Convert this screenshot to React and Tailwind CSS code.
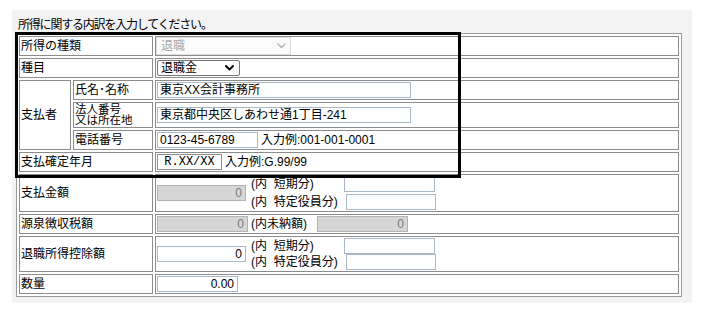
import React from "react";

const FONT = { fontFamily: '"Liberation Sans", "Noto Sans CJK JP", sans-serif' };

function Chevron({ color = "#000", w = 2 }) {
  return (
    <svg width="9" height="6" viewBox="0 0 9 6" className="shrink-0">
      <polyline points="1,1 4.5,4.5 8,1" fill="none" stroke={color} strokeWidth={w} strokeLinecap="round" strokeLinejoin="round" />
    </svg>
  );
}

function TextBox({ w, children, cls = "" }) {
  return (
    <div className={`h-[16px] border border-[#a9b7c6] bg-white flex items-center px-[2px] text-[12px] leading-[14px] whitespace-nowrap overflow-hidden ${cls}`} style={{ width: w }}>
      {children}
    </div>
  );
}

function GrayBox({ w }) {
  return (
    <div className="h-[16px] border border-[#b3b3b3] bg-[#d6d6d6] flex items-center justify-end pr-[3px] text-[12px] leading-[14px] text-[#7a7a7a]" style={{ width: w }}>
      0
    </div>
  );
}

function Cell({ children, cls = "", ...rest }) {
  return (
    <td className={`border border-[#8c8c8c] p-[1px] align-middle ${cls}`} {...rest}>
      {children}
    </td>
  );
}

function SubLines({ gap = "gap-[1px]" }) {
  return (
    <div className={`flex flex-col ${gap} ml-[5px]`}>
      <div className="flex items-center h-[16px] overflow-hidden">
        <span className="w-[93px] whitespace-pre leading-[14px]">(内  短期分)</span>
        <TextBox w={91} />
      </div>
      <div className="flex items-center h-[16px] overflow-hidden">
        <span className="w-[95px] whitespace-pre leading-[14px]">(内  特定役員分)</span>
        <TextBox w={90} />
      </div>
    </div>
  );
}

export default function App() {
  return (
    <div className="w-[701px] h-[315px] bg-white pt-[10px] pl-[12px] text-black text-[12px]" style={FONT}>
      <div className="relative w-[680px] h-[293px] bg-[#f3f3f3] pt-[8px] pl-[4px]">
        <div className="h-[15px] leading-[15px] pl-[2px] tracking-[-1.2px] whitespace-nowrap">所得に関する内訳を入力してください。</div>
        <table className="w-[666px] table-fixed border-separate border-spacing-[2px] border border-[#9a9a9a] bg-white text-[12px] leading-[14px]">
          <colgroup>
            <col className="w-[52px]" />
            <col className="w-[80px]" />
            <col />
          </colgroup>
          <tbody>
            <tr className="h-[20px]">
              <Cell colSpan={2}>所得の種類</Cell>
              <Cell cls="!py-0">
                <div className="-ml-[1px] w-[135px] h-[18px] border border-[#dedede] bg-[#fbfbfb] flex items-center justify-between pl-[4px] pr-[4px] text-[#a8a8a8]">
                  <span>退職</span>
                  <Chevron color="#b8b8b8" w={1.5} />
                </div>
              </Cell>
            </tr>
            <tr className="h-[20px]">
              <Cell colSpan={2}>種目</Cell>
              <Cell>
                <div className="w-[83px] h-[16px] border border-[#767676] rounded-[2px] bg-white flex items-center justify-between pl-[3px] pr-[5px]">
                  <span>退職金</span>
                  <Chevron color="#000" w={2} />
                </div>
              </Cell>
            </tr>
            <tr className="h-[20px]">
              <Cell rowSpan={3}>支払者</Cell>
              <Cell>氏名･名称</Cell>
              <Cell>
                <TextBox w={254}>東京XX会計事務所</TextBox>
              </Cell>
            </tr>
            <tr className="h-[26px]">
              <Cell cls="leading-[11.5px] text-[11.5px] !p-0 !pl-[1px]">
                <div>法人番号</div>
                <div>又は所在地</div>
              </Cell>
              <Cell>
                <TextBox w={254}>東京都中央区しあわせ通1丁目-241</TextBox>
              </Cell>
            </tr>
            <tr className="h-[20px]">
              <Cell>電話番号</Cell>
              <Cell>
                <div className="flex items-center">
                  <TextBox w={101} cls="border-[#9a9a9a]">0123-45-6789</TextBox>
                  <span className="ml-[3px] whitespace-nowrap">入力例:001-001-0001</span>
                </div>
              </Cell>
            </tr>
            <tr className="h-[20px]">
              <Cell colSpan={2}>支払確定年月</Cell>
              <Cell>
                <div className="flex items-center">
                  <div className="w-[65px] h-[16px] border border-[#8f8f8f] bg-white flex items-center justify-center text-[12px]" style={{ fontFamily: '"Liberation Mono", monospace' }}>R.XX/XX</div>
                  <span className="ml-[3px] whitespace-nowrap">入力例:G.99/99</span>
                </div>
              </Cell>
            </tr>
            <tr className="h-[38px]">
              <Cell colSpan={2}>支払金額</Cell>
              <Cell>
                <div className="flex items-center">
                  <GrayBox w={89} />
                  <SubLines gap="gap-[2px]" />
                </div>
              </Cell>
            </tr>
            <tr className="h-[20px]">
              <Cell colSpan={2}>源泉徴収税額</Cell>
              <Cell>
                <div className="flex items-center">
                  <GrayBox w={91} />
                  <span className="ml-[3px] w-[66px] whitespace-nowrap">(内未納額)</span>
                  <GrayBox w={91} />
                </div>
              </Cell>
            </tr>
            <tr className="h-[36px]">
              <Cell colSpan={2}>退職所得控除額</Cell>
              <Cell>
                <div className="flex items-center">
                  <TextBox w={89} cls="justify-end pr-[3px]">0</TextBox>
                  <SubLines gap="gap-0" />
                </div>
              </Cell>
            </tr>
            <tr className="h-[20px]">
              <Cell colSpan={2}>数量</Cell>
              <Cell>
                <TextBox w={81} cls="justify-end pr-[3px]">0.00</TextBox>
              </Cell>
            </tr>
          </tbody>
        </table>
        <div className="absolute left-[3px] top-[22px] w-[446px] h-[146px] border-[3px] border-black pointer-events-none" />
      </div>
    </div>
  );
}
